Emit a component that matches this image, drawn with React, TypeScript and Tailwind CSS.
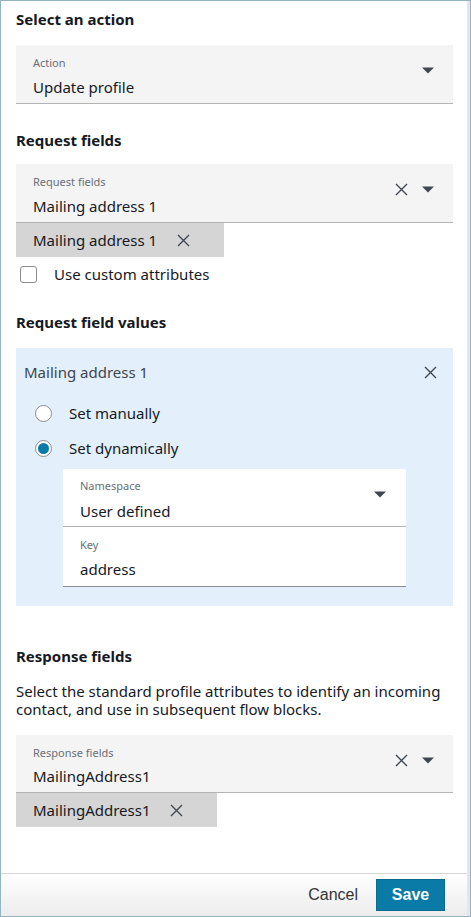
const font = { fontFamily: "'Noto Sans', Roboto, sans-serif" };

function Caret() {
  return (
    <svg width="12" height="7" viewBox="0 0 12 7" className="shrink-0">
      <path d="M0 0.5 L12 0.5 L6 6.5 Z" fill="#414750" />
    </svg>
  );
}

function Cross({ size = 13 }: { size?: number }) {
  return (
    <svg width={size} height={size} viewBox="0 0 13 13" className="shrink-0">
      <path d="M1 1 L12 12 M12 1 L1 12" stroke="#414750" strokeWidth="1.4" fill="none" />
    </svg>
  );
}

type SelectProps = {
  label: string;
  value: string;
  clearable?: boolean;
  valueGap?: string;
};

function SelectField({ label, value, clearable, valueGap = "mt-[7px]" }: SelectProps) {
  return (
    <div className="flex items-center border-b border-[#b4b4b4] bg-[#f4f4f4] pl-[17px] pr-[19px] pt-[11px] pb-[6px]">
      <div className="flex-1">
        <div className="text-[11px] leading-[14px] text-[#687078]">{label}</div>
        <div className={`${valueGap} text-[15px] leading-[20px] text-[#16191f]`}>{value}</div>
      </div>
      <div className="-mt-[12px] flex items-center gap-[14px]">
        {clearable ? <Cross /> : null}
        <Caret />
      </div>
    </div>
  );
}

function Chip({ text, width }: { text: string; width: string }) {
  return (
    <div className={`flex h-[34px] ${width} items-center bg-[#d5d5d5] pl-[17px] text-[15px] text-[#16191f]`}>
      <span>{text}</span>
      <span className="ml-[20px]">
        <Cross />
      </span>
    </div>
  );
}

function Radio({ checked, label, className }: { checked?: boolean; label: string; className: string }) {
  return (
    <div className={`flex items-center ${className} pl-[19px]`}>
      <span className="flex h-[17px] w-[17px] items-center justify-center rounded-full border border-[#8d8d8d] bg-white">
        {checked ? <span className="h-[11px] w-[11px] rounded-full bg-[#0a7aa8]" /> : null}
      </span>
      <span className="ml-[17px] text-[15px] leading-[20px] text-[#16191f]">{label}</span>
    </div>
  );
}

function Heading({ children, className }: { children: string; className: string }) {
  return <h2 className={`${className} text-[15px] font-bold leading-[20px] text-[#16191f]`}>{children}</h2>;
}

export default function App() {
  return (
    <div className="flex h-[917px] w-[471px] border border-[#93b4c5] bg-white" style={font}>
      <div className="flex min-w-0 flex-1 flex-col">
        <div className="flex-1 pl-[15px] pr-[14px] pt-[8px]">
          <Heading className="">Select an action</Heading>
          <div className="mt-[16px]">
            <SelectField label="Action" value="Update profile" />
          </div>

          <Heading className="mt-[26px]">Request fields</Heading>
          <div className="mt-[14px]">
            <SelectField label="Request fields" value="Mailing address 1" clearable />
          </div>
          <Chip text="Mailing address 1" width="w-[208px]" />
          <label className="mt-[7px] flex items-center pl-[4px]">
            <span className="h-[17px] w-[17px] rounded-[3px] border border-[#8d8d8d] bg-white" />
            <span className="ml-[17px] text-[15px] leading-[20px] text-[#16191f]">Use custom attributes</span>
          </label>

          <Heading className="mt-[28px]">Request field values</Heading>
          <div className="mt-[16px] bg-[#e3f0fb] pb-[19px] pt-[14px]">
            <div className="flex items-center pl-[8px] pr-[16px]">
              <span className="flex-1 text-[15px] leading-[20px] text-[#3f454d]">Mailing address 1</span>
              <Cross />
            </div>
            <Radio label="Set manually" className="mt-[21px]" />
            <Radio label="Set dynamically" checked className="mt-[15px]" />
            <div className="ml-[47px] mt-[11px] w-[343px] bg-white">
              <div className="flex items-center border-b border-[#b4b4b4] pl-[17px] pr-[20px] pt-[10px] pb-[5px]">
                <div className="flex-1">
                  <div className="text-[11px] leading-[14px] text-[#687078]">Namespace</div>
                  <div className="mt-[8px] text-[15px] leading-[20px] text-[#16191f]">User defined</div>
                </div>
                <div className="-mt-[12px]">
                  <Caret />
                </div>
              </div>
              <div className="border-b border-[#8d8d8d] pl-[17px] pt-[11px] pb-[7px]">
                <div className="text-[11px] leading-[14px] text-[#687078]">Key</div>
                <div className="mt-[7px] text-[15px] leading-[20px] text-[#16191f]">address</div>
              </div>
            </div>
          </div>

          <Heading className="mt-[40px]">Response fields</Heading>
          <p className="mt-[16px] text-[15px] leading-[18px] text-[#16191f]">
            Select the standard profile attributes to identify an incoming contact, and use in subsequent flow blocks.
          </p>
          <div className="mt-[17px]">
            <SelectField label="Response fields" value="MailingAddress1" clearable valueGap="mt-[6px]" />
          </div>
          <Chip text="MailingAddress1" width="w-[201px]" />
        </div>

        <div
          className="flex h-[43px] items-center justify-end border-t border-[#d6d6d6] bg-gradient-to-b from-white to-[#ececec] pr-[22px]"
          style={{ fontFamily: "'Liberation Sans', Arial, sans-serif" }}
        >
          <button className="text-[16px] text-[#333]">Cancel</button>
          <button className="ml-[18px] h-[32px] w-[69px] border border-[#0b6a8e] bg-[#0a7aa6] text-[16px] font-bold text-white">
            Save
          </button>
        </div>
      </div>
      <div className="w-[3px] bg-[#e6e6e6]" />
    </div>
  );
}
